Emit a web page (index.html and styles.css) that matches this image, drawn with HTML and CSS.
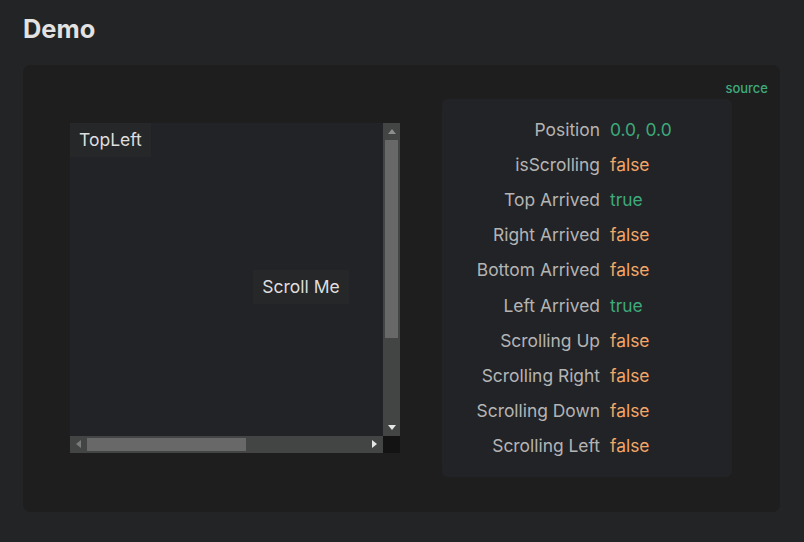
FILE: index.html
```html
<!DOCTYPE html>
<html lang="en">
<head>
<meta charset="utf-8">
<title>Demo</title>
<link rel="stylesheet" href="styles.css">
</head>
<body>
  <h2 class="title">Demo</h2>
  <div class="card">
    <div class="source-row"><a class="source" href="#">source</a></div>
    <div class="demo">
      <div class="scrollbox">
        <div class="viewport">
          <div class="canvas">
            <div class="tag tag-tl">TopLeft</div>
            <div class="tag tag-mid">Scroll Me</div>
          </div>
        </div>
        <div class="vbar">
          <div class="arrow">
            <svg width="8" height="5" viewBox="0 0 8 5"><polygon points="4,0 8,5 0,5" fill="#8d8d8d"/></svg>
          </div>
          <div class="vtrack"><div class="vthumb"></div></div>
          <div class="arrow">
            <svg width="8" height="5" viewBox="0 0 8 5"><polygon points="0,0 8,0 4,5" fill="#e6e6e6"/></svg>
          </div>
        </div>
        <div class="hbar">
          <div class="arrow">
            <svg width="5" height="8" viewBox="0 0 5 8"><polygon points="5,0 5,8 0,4" fill="#7a7a7a"/></svg>
          </div>
          <div class="htrack"><div class="hthumb"></div></div>
          <div class="arrow">
            <svg width="5" height="8" viewBox="0 0 5 8"><polygon points="0,0 5,4 0,8" fill="#e6e6e6"/></svg>
          </div>
        </div>
        <div class="corner"></div>
      </div>
      <div class="panel">
        <div class="lbl">Position</div><div class="val ok">0.0, 0.0</div>
        <div class="lbl">isScrolling</div><div class="val no">false</div>
        <div class="lbl">Top Arrived</div><div class="val ok">true</div>
        <div class="lbl">Right Arrived</div><div class="val no">false</div>
        <div class="lbl">Bottom Arrived</div><div class="val no">false</div>
        <div class="lbl">Left Arrived</div><div class="val ok">true</div>
        <div class="lbl">Scrolling Up</div><div class="val no">false</div>
        <div class="lbl">Scrolling Right</div><div class="val no">false</div>
        <div class="lbl">Scrolling Down</div><div class="val no">false</div>
        <div class="lbl">Scrolling Left</div><div class="val no">false</div>
      </div>
    </div>
  </div>
</body>
</html>
```
FILE: styles.css
```css
html, body {
  margin: 0;
  padding: 0;
  background: #222425;
  color: #dfdfdf;
  font-family: Inter, "Noto Sans", sans-serif;
}
body {
  padding: 14px 24px 30px 23px;
}
.title {
  margin: 0 0 21px 0;
  font-size: 25.4px;
  font-weight: 700;
  line-height: 30px;
  color: #e2e2e2;
}
.card {
  background: #1e1e1e;
  border-radius: 8px;
  padding: 13px 12px 35px 47px;
}
.source-row {
  text-align: right;
  line-height: 18px;
  height: 21px;
}
.source {
  font-size: 13px;
  font-weight: 500;
  color: #3eaa7c;
  text-decoration: none;
}
.demo {
  display: flex;
  align-items: center;
  gap: 42px;
}
.scrollbox {
  width: 330px;
  height: 330px;
  flex: none;
  display: grid;
  grid-template-columns: 313px 17px;
  grid-template-rows: 313px 17px;
  background: #222326;
}
.viewport {
  overflow: hidden;
  background: #222326;
}
.canvas {
  position: relative;
  width: 550px;
  height: 442px;
}
.tag {
  position: absolute;
  background: #262729;
  padding: 5px 9px;
  font-size: 17.5px;
  line-height: 24px;
  color: #dedede;
  white-space: nowrap;
}
.tag-tl { left: 0; top: 0; }
.tag-mid { left: 33.333%; top: 33.333%; }
.vbar {
  background: #434545;
  display: flex;
  flex-direction: column;
}
.hbar {
  background: #434545;
  display: flex;
}
.arrow {
  width: 17px;
  height: 17px;
  flex: none;
  display: flex;
  align-items: center;
  justify-content: center;
}
.vtrack {
  flex: 1;
  padding: 0 2px;
}
.vthumb {
  height: 198px;
  background: #686868;
}
.htrack {
  flex: 1;
  padding: 2px 0;
}
.hthumb {
  width: 159px;
  height: 13px;
  background: #686868;
}
.corner {
  background: #131313;
}
.panel {
  width: 290px;
  background: #222326;
  border-radius: 6px;
  padding: 13px 0;
  display: grid;
  grid-template-columns: 158px auto;
  column-gap: 10px;
  grid-auto-rows: 35.2px;
  align-items: center;
  font-size: 17.4px;
  line-height: 22px;
}
.lbl {
  text-align: right;
  color: #b4b4b4;
}
.val.ok { color: #3eaa7c; }
.val.no { color: #f2a766; }
```
